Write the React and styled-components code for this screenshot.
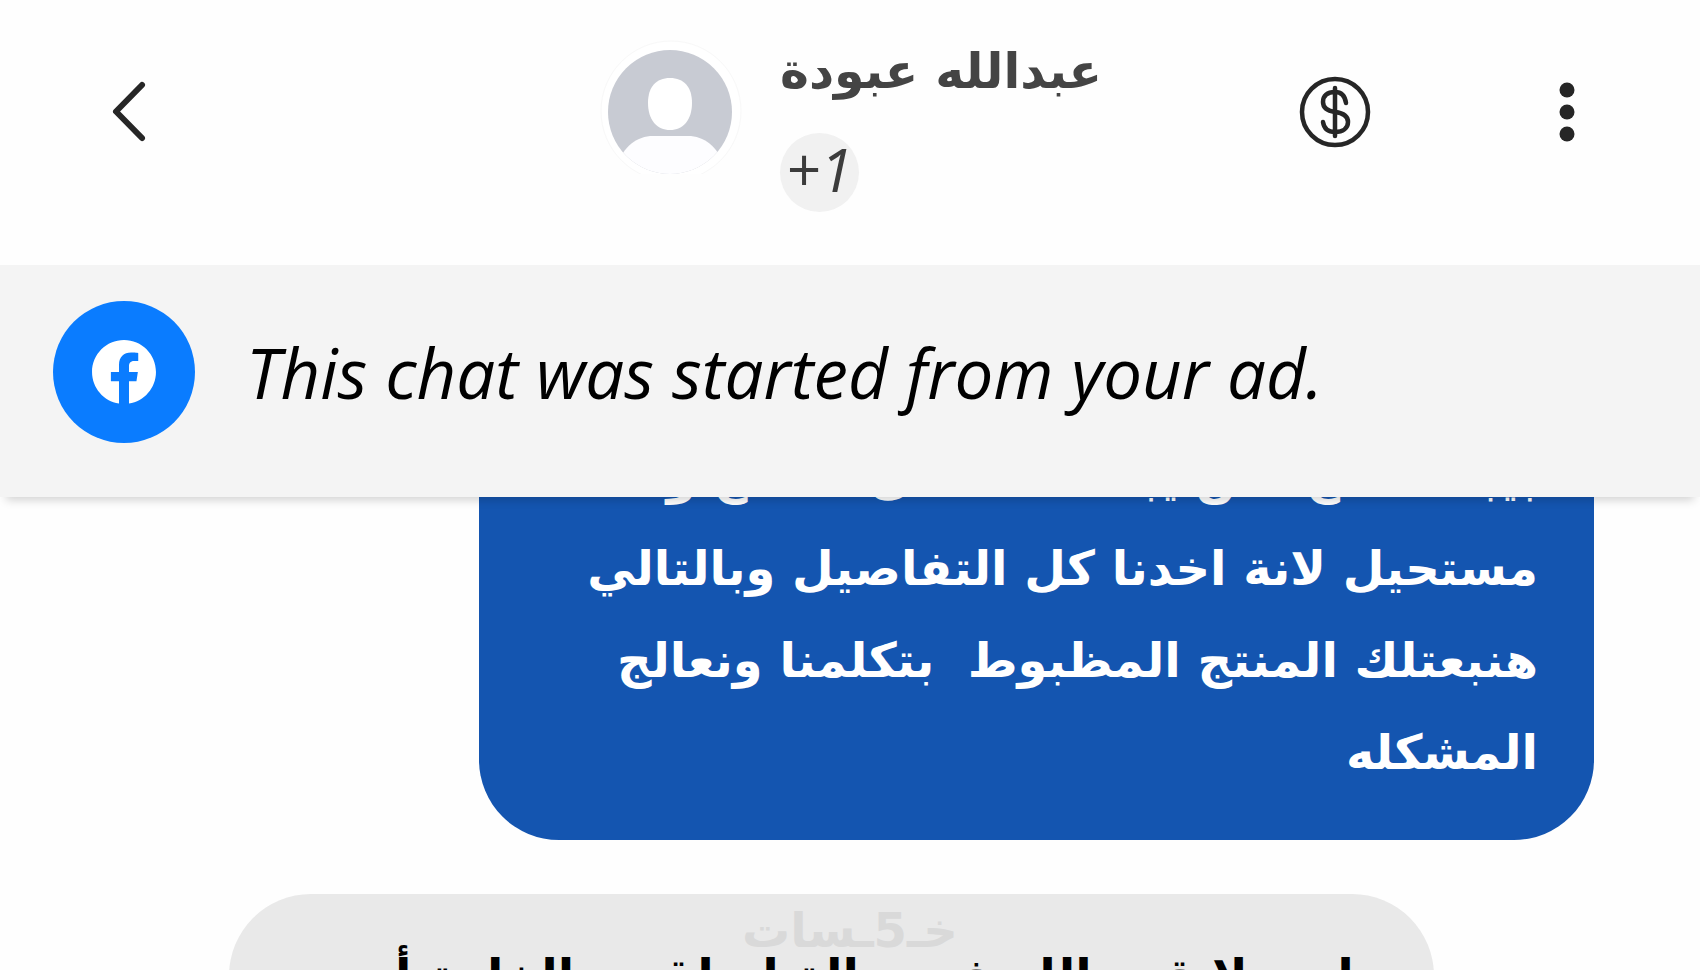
import React from "react";
import styled, { createGlobalStyle } from "styled-components";
import { FaFacebook } from "react-icons/fa";

const GlobalStyle = createGlobalStyle`
  * {
    box-sizing: border-box;
  }
  body {
    margin: 0;
    background-color: #fefefe;
    font-family: "Open Sans", "DejaVu Sans", sans-serif;
  }
`

const MainContainer = styled.div`
  display: flex;
  flex-direction: column;
  height: 100vh;
  overflow: hidden;
`

const Header = styled.header`
  display: grid;
  grid-template-columns: 600px 1fr auto;
  align-items: start;
  padding: 32px 93px 53px 0;
`

const IconButton = styled.button`
  display: flex;
  align-items: center;
  justify-content: center;
  width: 80px;
  height: 80px;
  padding: 0;
  border: none;
  background: none;
  cursor: pointer;
`

const BackButton = styled(IconButton)`
  margin: 40px 0 0 89px;
`

const Contact = styled.div`
  display: flex;
  gap: 38px;
`

const ContactInfo = styled.div`
  display: flex;
  flex-direction: column;
  align-items: flex-start;
  gap: 21px;
`

const ContactName = styled.h1`
  margin: 0;
  font-family: "DejaVu Sans", sans-serif;
  font-size: 49px;
  font-weight: bold;
  line-height: 80px;
  color: #444;
  white-space: nowrap;
`

const LabelBadge = styled.span`
  display: flex;
  align-items: center;
  justify-content: center;
  width: 79px;
  height: 79px;
  padding-bottom: 8px;
  border-radius: 50%;
  background-color: #f1f1f1;
  color: #3c3c3c;
  font-size: 60px;
  font-style: italic;
  line-height: 70px;
`

const HeaderActions = styled.div`
  display: flex;
  gap: 152px;
  padding-top: 40px;
`

const AdBanner = styled.section`
  position: relative;
  z-index: 1;
  display: flex;
  align-items: center;
  gap: 51px;
  flex-shrink: 0;
  height: 232px;
  padding: 0 53px 18px;
  background-color: #f4f4f4;
  box-shadow: 0 9px 9px -6px rgba(0, 0, 0, 0.18);
`

const AdIcon = styled.span`
  display: flex;
  align-items: center;
  justify-content: center;
  flex-shrink: 0;
  width: 142px;
  height: 142px;
  border-radius: 50%;
  background-color: #0a7cff;
  color: #fff;
  font-size: 66px;
`

const AdText = styled.p`
  margin: 0;
  font-size: 69px;
  font-style: italic;
  color: #000;
  white-space: nowrap;
`

const Messages = styled.main`
  display: flex;
  flex-direction: column;
  gap: 54px;
  margin-top: -67px;
  padding: 0 106px 0 229px;
`

const Bubble = styled.div`
  flex-shrink: 0;
  align-self: ${props => (props.$sent ? "flex-end" : "flex-start")};
  width: ${props => (props.$sent ? "1115px" : "1205px")};
  max-width: 100%;
  padding: ${props => (props.$sent ? "0 56px 42px" : "36px 54px")};
  border-radius: ${props => (props.$sent ? "0 0 80px 80px" : "86px")};
  background-color: ${props => (props.$sent ? "#1455b0" : "#e9e9e9")};
  color: ${props => (props.$sent ? "#fff" : "#000")};
  font-family: "DejaVu Sans", sans-serif;
  font-size: 48px;
  font-weight: bold;
  line-height: 92px;
  white-space: pre;
`

const Watermark = styled.div`
  position: absolute;
  left: 50%;
  bottom: 16px;
  transform: translateX(-50%);
  font-family: "DejaVu Sans", sans-serif;
  font-size: 48px;
  font-weight: bold;
  line-height: 48px;
  color: #d9d9d9;
  pointer-events: none;
`

const sentLines = [
  "بيبا المنتج لمن يبدا معا كامل المنتج و",
  "مستحيل لانة اخدنا كل التفاصيل وبالتالي",
  "هنبعتلك المنتج المظبوط  بتكلمنا ونعالج",
  "المشكله",
]

function Avatar() {
  return (
    <svg width="142" height="142" viewBox="0 0 142 142" role="img" aria-label="عبدالله عبودة">
      <defs>
        <clipPath id="avatar">
          <circle cx="70" cy="80" r="62" />
        </clipPath>
      </defs>
      <circle cx="71" cy="79" r="70" fill="#fff" stroke="#f8f8f8" />
      <circle cx="70" cy="80" r="62" fill="#c8cbd3" />
      <path
        d="M48 71C48 55 56 46 70 46S92 55 92 71C92 88 83 98 70 98S48 88 48 71Z"
        fill="#fff"
      />
      <path
        d="M16 142V134C24 114 37 104 53 104H88C104 104 117 114 125 134V142Z"
        fill="#fdfdff"
        clipPath="url(#avatar)"
      />
    </svg>
  )
}

class App extends React.Component {
  render() {
    return (
      <MainContainer>
        <GlobalStyle />
        <Header>
          <BackButton aria-label="Back">
            <svg width="80" height="80" viewBox="0 0 80 80" fill="none" stroke="#262626" strokeWidth="6" strokeLinecap="round" strokeLinejoin="round">
              <path d="M53 13L27 39.500L53 66" />
            </svg>
          </BackButton>
          <Contact>
            <Avatar />
            <ContactInfo>
              <ContactName dir="rtl">عبدالله عبودة</ContactName>
              <LabelBadge>+1</LabelBadge>
            </ContactInfo>
          </Contact>
          <HeaderActions>
            <IconButton aria-label="Payments">
              <svg width="80" height="80" viewBox="0 0 80 80" fill="none" stroke="#262626" strokeWidth="4.500" strokeLinecap="round">
                <circle cx="40" cy="40" r="33" />
                <path d="M40 16V64" />
                <path d="M51 31C50 24 46 20 40 20C32 20 28 24 28 30C28 36 33 39 40 40C48 41 53 44 53 50C53 56 48 60 40 60C33 60 29 57 28 50" />
              </svg>
            </IconButton>
            <IconButton aria-label="More">
              <svg width="80" height="80" viewBox="0 0 80 80" fill="#262626">
                <circle cx="40" cy="18" r="7.500" />
                <circle cx="40" cy="40" r="7.500" />
                <circle cx="40" cy="62" r="7.500" />
              </svg>
            </IconButton>
          </HeaderActions>
        </Header>
        <AdBanner>
          <AdIcon><FaFacebook /></AdIcon>
          <AdText>This chat was started from your ad.</AdText>
        </AdBanner>
        <Messages>
          <Bubble $sent dir="rtl">{sentLines.join("\n")}</Bubble>
          <Bubble dir="rtl">طيب لا قدر الله في حالة لو لقيت الخامة أو</Bubble>
        </Messages>
        <Watermark dir="rtl">خـ5ـسات</Watermark>
      </MainContainer>
    )
  }
}

export default App;
